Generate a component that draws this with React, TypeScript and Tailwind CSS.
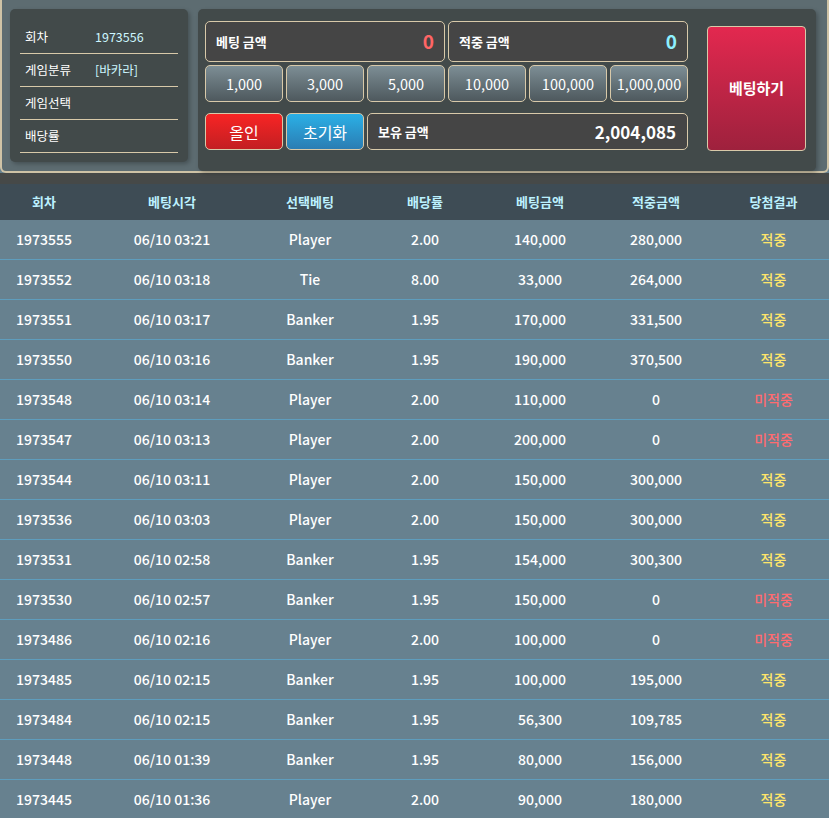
import React from "react";

type Bet = {
  round: string;
  time: string;
  pick: string;
  odds: string;
  amount: string;
  win: string;
  hit: boolean;
};

const rows: Bet[] = [
  { round: "1973555", time: "06/10 03:21", pick: "Player", odds: "2.00", amount: "140,000", win: "280,000", hit: true },
  { round: "1973552", time: "06/10 03:18", pick: "Tie", odds: "8.00", amount: "33,000", win: "264,000", hit: true },
  { round: "1973551", time: "06/10 03:17", pick: "Banker", odds: "1.95", amount: "170,000", win: "331,500", hit: true },
  { round: "1973550", time: "06/10 03:16", pick: "Banker", odds: "1.95", amount: "190,000", win: "370,500", hit: true },
  { round: "1973548", time: "06/10 03:14", pick: "Player", odds: "2.00", amount: "110,000", win: "0", hit: false },
  { round: "1973547", time: "06/10 03:13", pick: "Player", odds: "2.00", amount: "200,000", win: "0", hit: false },
  { round: "1973544", time: "06/10 03:11", pick: "Player", odds: "2.00", amount: "150,000", win: "300,000", hit: true },
  { round: "1973536", time: "06/10 03:03", pick: "Player", odds: "2.00", amount: "150,000", win: "300,000", hit: true },
  { round: "1973531", time: "06/10 02:58", pick: "Banker", odds: "1.95", amount: "154,000", win: "300,300", hit: true },
  { round: "1973530", time: "06/10 02:57", pick: "Banker", odds: "1.95", amount: "150,000", win: "0", hit: false },
  { round: "1973486", time: "06/10 02:16", pick: "Player", odds: "2.00", amount: "100,000", win: "0", hit: false },
  { round: "1973485", time: "06/10 02:15", pick: "Banker", odds: "1.95", amount: "100,000", win: "195,000", hit: true },
  { round: "1973484", time: "06/10 02:15", pick: "Banker", odds: "1.95", amount: "56,300", win: "109,785", hit: true },
  { round: "1973448", time: "06/10 01:39", pick: "Banker", odds: "1.95", amount: "80,000", win: "156,000", hit: true },
  { round: "1973445", time: "06/10 01:36", pick: "Player", odds: "2.00", amount: "90,000", win: "180,000", hit: true },
];

const chips = ["1,000", "3,000", "5,000", "10,000", "100,000", "1,000,000"];

const cols = "grid grid-cols-[88px_168px_108px_122px_108px_124px_111px]";

function InfoRow({ label, value }: { label: string; value?: string }) {
  return (
    <div className="flex items-center h-[33px] border-b border-[#d8c9a9] mx-[10px] px-[5px] text-[12.5px]">
      <span className="w-[70px] text-white">{label}</span>
      {value && <span className="text-[#cdf6ff]">{value}</span>}
    </div>
  );
}

export default function App() {
  return (
    <div
      className="w-[829px] min-h-[818px] bg-[#67818f] overflow-hidden"
      style={{ fontFamily: '"Noto Sans CJK KR", "Noto Sans", sans-serif' }}
    >
      {/* betting control panel */}
      <div className="h-[173px] bg-[#5d6c71] border-x-2 border-b-2 border-[#cfc3a6] rounded-b-[6px] flex items-start pt-[9px] pl-[8px] pr-[11px] gap-[10px]">
        <div className="w-[180px] h-[153px] bg-[#424a4a] rounded-[5px] shadow-[2px_2px_4px_rgba(0,0,0,0.25)] pt-[12px]">
          <InfoRow label="회차" value="1973556" />
          <InfoRow label="게임분류" value="[바카라]" />
          <InfoRow label="게임선택" />
          <InfoRow label="배당률" />
        </div>

        <div className="flex-1 h-[162px] bg-[#424a4a] rounded-[5px] shadow-[2px_2px_4px_rgba(0,0,0,0.25)] flex items-start pt-[12px] pl-[7px] pr-[10px]">
          <div className="w-[483px] grid grid-cols-6 gap-x-[3px]">
            <div className="col-span-3 h-[41px] bg-[#454545] border border-[#d8c9a9] rounded-[5px] flex items-center justify-between px-[10px]">
              <span className="text-white text-[13px] font-bold">베팅 금액</span>
              <span className="text-[#ff6565] text-[19px] font-bold">0</span>
            </div>
            <div className="col-span-3 h-[41px] bg-[#454545] border border-[#d8c9a9] rounded-[5px] flex items-center justify-between px-[10px]">
              <span className="text-white text-[13px] font-bold">적중 금액</span>
              <span className="text-[#8ef0ff] text-[19px] font-bold">0</span>
            </div>

            {chips.map((c) => (
              <button
                key={c}
                className="mt-[3px] h-[37px] rounded-[5px] border border-[#d8c9a9] bg-gradient-to-b from-[#7d8e95] to-[#4e595e] text-white text-[14.5px] flex items-center justify-center"
              >
                {c}
              </button>
            ))}

            <button className="mt-[11px] h-[37px] rounded-[5px] border border-[#d8c9a9] bg-gradient-to-b from-[#f82424] to-[#c31f22] text-white text-[16px] flex items-center justify-center">
              올인
            </button>
            <button className="mt-[11px] h-[37px] rounded-[5px] border border-[#d8c9a9] bg-gradient-to-b from-[#2ab0e6] to-[#2a7db3] text-white text-[16px] flex items-center justify-center">
              초기화
            </button>
            <div className="col-span-4 mt-[11px] h-[37px] bg-[#454545] border border-[#d8c9a9] rounded-[5px] flex items-center justify-between pl-[10px] pr-[11px]">
              <span className="text-white text-[13px] font-bold">보유 금액</span>
              <span className="text-white text-[17px] font-bold">2,004,085</span>
            </div>
          </div>

          <button className="ml-[19px] mt-[5px] w-[99px] h-[125px] rounded-[4px] border border-[#d8c9a9] bg-gradient-to-b from-[#e3284f] to-[#9e213d] text-white text-[15px] font-bold flex items-center justify-center">
            베팅하기
          </button>
        </div>
      </div>

      <div className="h-[11px] bg-[#464948]" />

      {/* bet history table */}
      <div className={`${cols} h-[36px] bg-[#3e4c55] items-center text-[#bcf1ff] text-[13px] font-bold text-center`}>
        <div>회차</div>
        <div>베팅시각</div>
        <div>선택베팅</div>
        <div>배당률</div>
        <div>베팅금액</div>
        <div>적중금액</div>
        <div>당첨결과</div>
      </div>

      {rows.map((r) => (
        <div
          key={r.round + r.time}
          className={`${cols} h-[40px] bg-[#67818f] border-b border-[#5e9dbd] items-center text-white text-[14px] font-medium text-center`}
        >
          <div>{r.round}</div>
          <div>{r.time}</div>
          <div>{r.pick}</div>
          <div>{r.odds}</div>
          <div>{r.amount}</div>
          <div>{r.win}</div>
          <div className={r.hit ? "text-[#ffe56a]" : "text-[#ff6b6f]"}>{r.hit ? "적중" : "미적중"}</div>
        </div>
      ))}
    </div>
  );
}
